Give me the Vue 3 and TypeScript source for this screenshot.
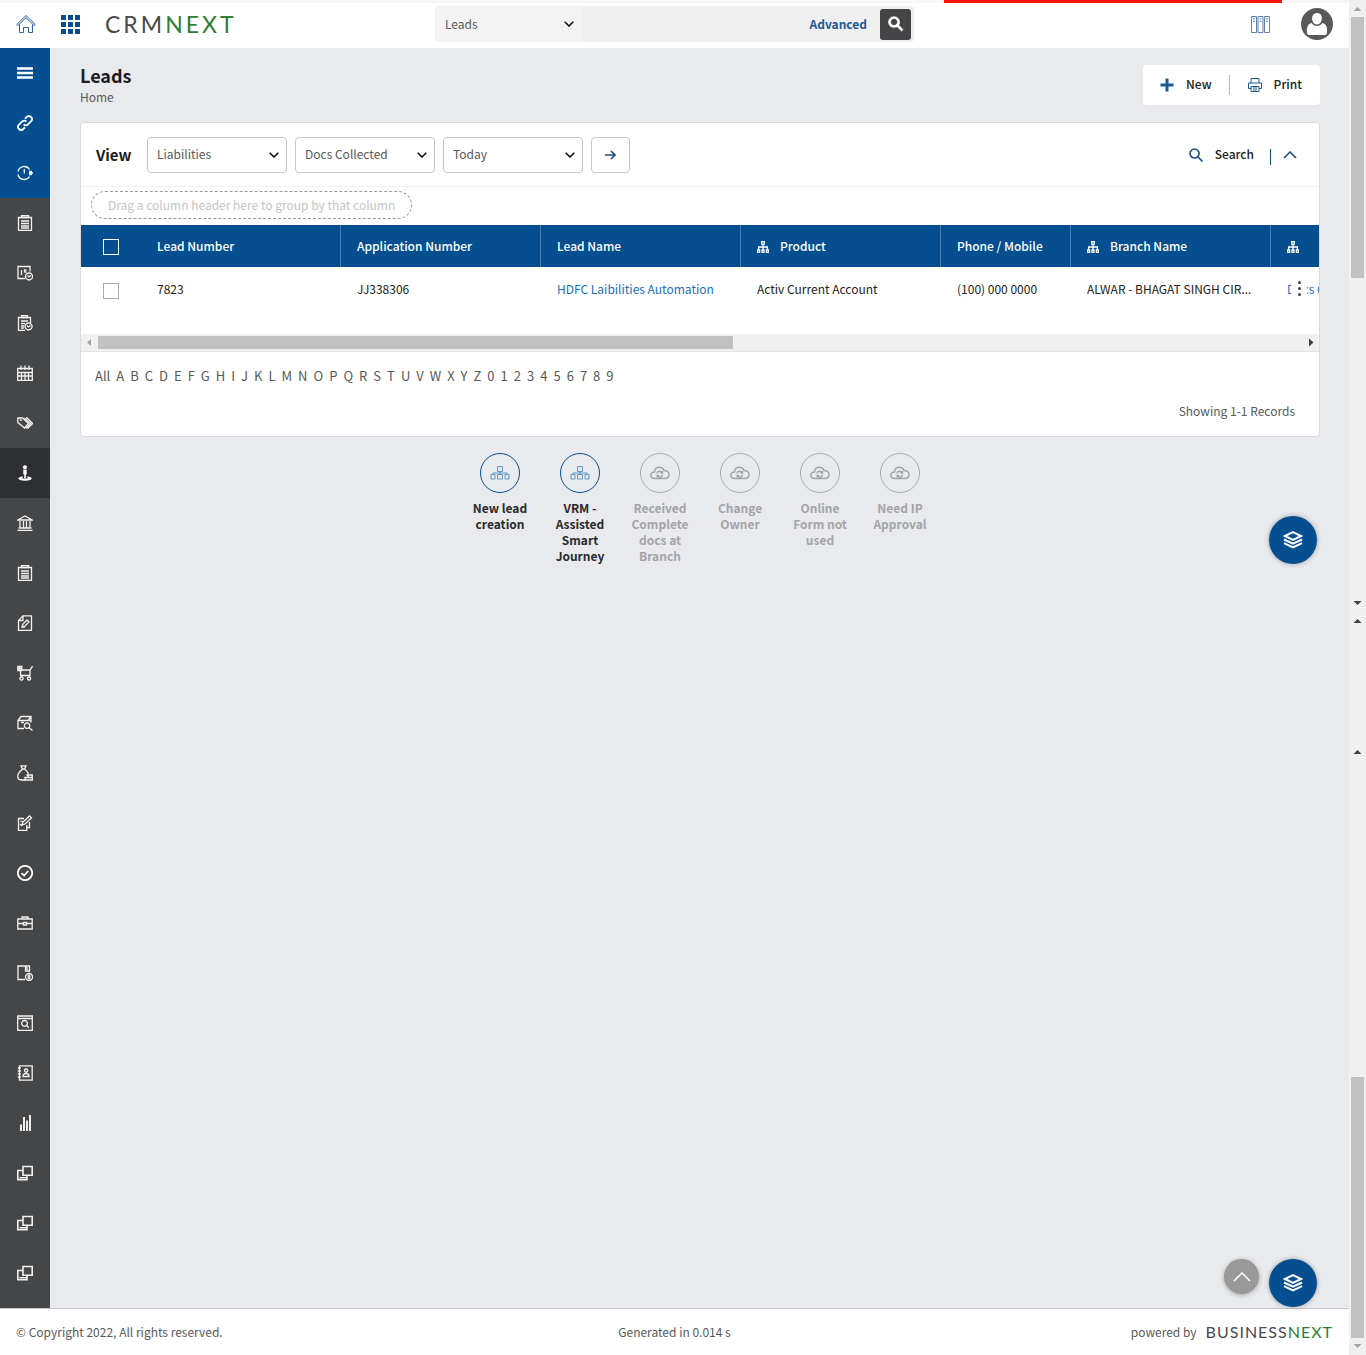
<script setup lang="ts">
import { ref } from 'vue'

interface NavItem {
  label: string
  icon: string
  tone?: 'blue' | 'active'
}

interface Column {
  key: string
  label: string
  width: number
  lookup?: boolean
}

interface QuickAction {
  label: string
  enabled: boolean
}

const icons: Record<string, string[]> = {
  menu: ['M0 3.5H16M0 8H16M0 12.5H16'],
  link: [
    'M6.6 9.4a3 3 0 0 0 4.3 0l3.1-3.1a3 3 0 0 0-4.3-4.3L8 3.7',
    'M9.4 6.6a3 3 0 0 0-4.3 0L2 9.7A3 3 0 0 0 6.3 14L8 12.3',
  ],
  history: ['M1 6.500A6.300 6.300 0 0 1 12.500 4.500M1 9.500A6.300 6.300 0 0 0 12.500 11.500', 'M7.300 4v4.500', 'M12 6.500h3M12 8h4M12 9.500h3'],
  clipboard: ['M1.500 2.500h13v13h-13z', 'M4.500 2.500v-2h7v2z', 'M4 6h8M4 8.500h8M4 11h8M4 13h8'],
  schedule: ['M8 13.500H1v-12h12v5', 'M4.500 5v5M9.500 5H7.500v2h2', 'M12 8a3.500 3.500 0 1 0 .1 0zM10.500 10.500l1.500 1.500 2-1.500'],
  report: ['M8 15.500H1.500v-13h12V8', 'M4.500 2.500v-2h6v2z', 'M4 6h7M4 8.500h4M4 11h3M4 13h3', 'M11.500 8a3.500 3.500 0 1 0 .1 0zM10 10.500l1.500 1.500 2-1.500'],
  calendar: ['M.7 3.500h14.600v11.800H.7z', 'M4 .5V5M8 .5V5M12 .5V5', 'M1 7.500h14M1 11h14M4.500 7v8M8 7v8M11.500 7v8'],
  tags: ['M.8 3h4.700l6 5.500-4 4.500L.8 7.500z', 'M7.500 3l6 5.500-4.500 5', 'M9 3h1l5.500 5.500-5 5', 'M3 5h1v1'],
  person: ['M8 .3a2 2 0 1 1-.1 0z', 'M6.300 4.500h3.400v5h-.9v4H7.200v-4h-.9z', 'M6 11.500C-1 12 0 15.700 8 15.700s9-3.700 2-4.200v1c2.500.5 1 1.200-2 1.200s-4.500-.7-2-1.200z'],
  bank: ['M.8 5L8 1l7.200 4z', 'M3 6v7M6.500 6v7M9.500 6v7M13 6v7', 'M1.500 13h13M.5 15.300h15'],
  docEdit: ['M6 .8h8.500v14.500h-13V5.500zM6 .8v4.700H1.500', 'M5 12l1-3 4-4 2 2-4 4zM5 12h3'],
  cart: ['M.8 1.500h4v4h-4zM2.800 1v5M1 3.500h4', 'M5 5h8l2.500-4M13 5v5.500H3.500V6', 'M4.500 12a1.600 1.600 0 1 0 .1 0zM12 12a1.600 1.600 0 1 0 .1 0z'],
  boxSearch: ['M7 13.500H1v-8h13v2M1 5.500L4 1.500h10v4M14 1.500L11 5.500M4 7.500h3', 'M10 8a2.700 2.700 0 1 0 .1 0zM12 12.500l3.500 3'],
  moneyBag: ['M4 .8h5L7.500 4h-2zM5.500 4C2 7 .5 9.500.8 12c.2 2.500 1.500 3 3.500 3h4M7.500 4c2 1.500 3 3 4 4.500', 'M9.500 10h5.800v5H8v-2.500h7M11 8.500v4'],
  signDoc: ['M7 3.500H1.500v11.800h8.300V10', 'M12.500 7v5.500H10', 'M5 10l1-3 6.500-6 2 2-6.500 6zM3.500 6l3 1M3 9l2 2'],
  check: ['M8 .9a7.100 7.100 0 1 0 .1 0z', 'M4.500 8.200l2.700 2.300 4-4.500'],
  briefcase: ['M.8 4h14.400v10H.8zM5 4V2h6v2M.8 8.500h5.500M9.700 8.500h5.500M6.500 7.500h3v2.500h-3z'],
  docCoin: ['M8 14.500H1V1h11.500v6M8.500 1v5h4M10 2v3', 'M12 8.500a3.500 3.500 0 1 0 .1 0zM10.500 11h3M10.500 13h3M12 9.500v5'],
  windowSearch: ['M.7 1h14.600v14.300H.7zM.7 3.500h14.600', 'M7.500 5.500a2.900 2.900 0 1 0 .1 0zM9.600 10.500l2.200 2.200'],
  contacts: ['M2.500.8h12.700v14.400H2.500zM.8 3h3M.8 6h3M.8 9h3M.8 12h3', 'M9 4a1.600 1.600 0 1 0 .1 0zM6 11.500c0-4 6-4 6 0z'],
  chart: ['M4 9.500V16M7 2V16M10 5.500V16M13 0V16'],
  windows: ['M6 1.500h9.200v8.700H6z', 'M6 5.500H.8v9.200H10V10.500M2.500 12.700h8'],
}

const navItems: NavItem[] = [
  { label: 'Menu', icon: 'menu', tone: 'blue' },
  { label: 'Links', icon: 'link', tone: 'blue' },
  { label: 'Recent', icon: 'history', tone: 'blue' },
  { label: 'Tasks', icon: 'clipboard' },
  { label: 'Schedule', icon: 'schedule' },
  { label: 'Reports', icon: 'report' },
  { label: 'Calendar', icon: 'calendar' },
  { label: 'Offers', icon: 'tags' },
  { label: 'Leads', icon: 'person', tone: 'active' },
  { label: 'Accounts', icon: 'bank' },
  { label: 'Cases', icon: 'clipboard' },
  { label: 'Documents', icon: 'docEdit' },
  { label: 'Orders', icon: 'cart' },
  { label: 'Products', icon: 'boxSearch' },
  { label: 'Loans', icon: 'moneyBag' },
  { label: 'Applications', icon: 'signDoc' },
  { label: 'Approvals', icon: 'check' },
  { label: 'Portfolio', icon: 'briefcase' },
  { label: 'Deposits', icon: 'docCoin' },
  { label: 'Enquiry', icon: 'windowSearch' },
  { label: 'Contacts', icon: 'contacts' },
  { label: 'Analytics', icon: 'chart' },
  { label: 'Workspace 1', icon: 'windows' },
  { label: 'Workspace 2', icon: 'windows' },
  { label: 'Workspace 3', icon: 'windows' },
]

const columns: Column[] = [
  { key: 'number', label: 'Lead Number', width: 200 },
  { key: 'application', label: 'Application Number', width: 200 },
  { key: 'name', label: 'Lead Name', width: 200 },
  { key: 'product', label: 'Product', width: 200, lookup: true },
  { key: 'phone', label: 'Phone / Mobile', width: 130 },
  { key: 'branch', label: 'Branch Name', width: 200, lookup: true },
  { key: 'status', label: '', width: 200, lookup: true },
]

const filters = ref([
  { name: 'Category', value: 'Liabilities' },
  { name: 'Status', value: 'Docs Collected' },
  { name: 'Period', value: 'Today' },
])

const letters: string[] = ['All', ...'ABCDEFGHIJKLMNOPQRSTUVWXYZ0123456789']

const actions: QuickAction[] = [
  { label: 'New lead creation', enabled: true },
  { label: 'VRM - Assisted Smart Journey', enabled: true },
  { label: 'Received Complete docs at Branch', enabled: false },
  { label: 'Change Owner', enabled: false },
  { label: 'Online Form not used', enabled: false },
  { label: 'Need IP Approval', enabled: false },
]

const query = ref('')
</script>

<template>
  <div class="shell">
    <div class="progress"><span></span></div>
    <div class="page">
      <header class="topbar">
        <div class="brand">
          <a href="#" class="home" aria-label="Home">
            <svg width="20" height="20" viewBox="0 0 20 20"><path d="M.7 10.500L10 1.500l9.300 9-1.200 1L10 3.700 1.900 11.500zM3.500 10.500v8h4v-5h5v5h4v-8" /></svg>
          </a>
          <button class="apps" aria-label="Applications">
            <svg width="19" height="19" viewBox="0 0 19 19"><path d="M0 0h5v5H0zM7 0h5v5H7zM14 0h5v5h-5zM0 7h5v5H0zM7 7h5v5H7zM14 7h5v5h-5zM0 14h5v5H0zM7 14h5v5H7zM14 14h5v5h-5z" /></svg>
          </button>
          <span class="logo">CRM<b>NEXT</b></span>
        </div>
        <form class="search" @submit.prevent>
          <label class="pick">
            <select aria-label="Search in"><option>Leads</option></select>
            <svg class="chev" width="10" height="6" viewBox="0 0 10 6"><path d="M.7.700l4.300 4.300L9.300.700" /></svg>
          </label>
          <input v-model="query" type="text" aria-label="Search text" />
          <a href="#">Advanced</a>
          <button aria-label="Search">
            <svg width="16" height="16" viewBox="0 0 16 16"><path d="M6 1.500a4.500 4.500 0 1 0 .1 0zM9.500 9.500l5 5" /></svg>
          </button>
        </form>
        <div class="tools">
          <button class="books" aria-label="Library">
            <svg width="19" height="17" viewBox="0 0 19 17"><path d="M.5.500h5v16h-5zM7 .5h5v16H7zM13.500.500h5v16h-5zM2 3h2M8.500 3h2M15 3h2M2 5.500h2M8.500 5.500h2M15 5.500h2" /></svg>
          </button>
          <button class="avatar" aria-label="Profile">
            <svg width="32" height="32" viewBox="0 0 32 32"><circle cx="16" cy="16" r="16" fill="#58595b" /><path d="M16 5c7 0 6 11.500 0 11.500S9 5 16 5zM10.500 15c3 4 8 4 11 0 4 1 5 5 4.500 9.500-.2 2-1 2.500-3 2.500H9c-2 0-2.800-.5-3-2.500C5.500 20 6.500 16 10.500 15z" fill="#fff" /></svg>
          </button>
        </div>
      </header>

      <div class="body">
        <nav class="sidebar">
          <a v-for="item in navItems" :key="item.label" href="#" :class="item.tone" :aria-label="item.label">
            <svg width="16" height="16" viewBox="0 0 16 16" :class="item.icon">
              <path v-for="d in icons[item.icon]" :key="d" :d="d" />
            </svg>
          </a>
        </nav>

        <main class="main">
          <div class="heading">
            <div>
              <h1>Leads</h1>
              <a href="#">Home</a>
            </div>
            <div class="commands">
              <button>
                <svg width="14" height="14" viewBox="0 0 14 14"><path d="M7 .5v13M.5 7h13" stroke-width="3" /></svg>
                <span>New</span>
              </button>
              <i></i>
              <button>
                <svg width="14" height="14" viewBox="0 0 14 14"><path d="M3 5V.5h8V5M3 10.500H.5V5h13v5.500H11M3 8.500h8v5H3zM5 10h4M5 12h4" /></svg>
                <span>Print</span>
              </button>
            </div>
          </div>

          <section class="card">
            <div class="filters">
              <h2>View</h2>
              <label v-for="f in filters" :key="f.name" class="pick">
                <select v-model="f.value" :aria-label="f.name"><option>{{ f.value }}</option></select>
                <svg class="chev" width="10" height="6" viewBox="0 0 10 6"><path d="M.7.700l4.300 4.300L9.300.700" /></svg>
              </label>
              <button class="go" aria-label="Apply view">
                <svg width="11" height="10" viewBox="0 0 11 10"><path d="M0 5h10M6 1l4 4-4 4" /></svg>
              </button>
              <button class="find">
                <svg width="14" height="14" viewBox="0 0 14 14"><path d="M5.500 1a4.500 4.500 0 1 0 .1 0zM9 9l4.500 4.500" /></svg>
                <span>Search</span>
              </button>
              <i></i>
              <button class="fold" aria-label="Collapse">
                <svg width="14" height="8" viewBox="0 0 14 8"><path d="M1 7l6-6 6 6" /></svg>
              </button>
            </div>
            <div class="grouping"><span>Drag a column header here to group by that column</span></div>

            <div class="grid">
              <table>
                <colgroup>
                  <col class="tick" />
                  <col v-for="c in columns" :key="c.key" :style="{ width: c.width + 'px' }" />
                </colgroup>
                <thead>
                  <tr>
                    <th class="tick"><input type="checkbox" aria-label="Select all" /></th>
                    <th v-for="c in columns" :key="c.key">
                      <svg v-if="c.lookup" width="12" height="12" viewBox="0 0 12 12"><path d="M4.700.600h2.600v2.600H4.700zM6 3.500V9M1.600 9V6h8.800v3M.6 9h2v2.400h-2zM5 9h2v2.400H5zM9.400 9h2v2.400h-2z" /></svg><span>{{ c.label }}</span>
                    </th>
                  </tr>
                </thead>
                <tbody>
                  <tr>
                    <td class="tick"><input type="checkbox" aria-label="Select lead 7823" /></td>
                    <td>7823</td>
                    <td>JJ338306</td>
                    <td><a href="#">HDFC Laibilities Automation</a></td>
                    <td>Activ Current Account</td>
                    <td>(100) 000 0000</td>
                    <td>ALWAR - BHAGAT SINGH CIR...</td>
                    <td><a href="#">Docs C</a></td>
                  </tr>
                </tbody>
              </table>
              <button class="more" aria-label="Row menu"><b></b><b></b><b></b></button>
            </div>
            <div class="hscroll">
              <svg width="17" height="17" viewBox="0 0 17 17"><path d="M10 5v7L6 8.500z" fill="#a3a3a3" /></svg>
              <span><b></b></span>
              <svg width="17" height="17" viewBox="0 0 17 17"><path d="M7 4.500v8l4.500-4z" fill="#404040" /></svg>
            </div>
            <div class="letters"><a v-for="l in letters" :key="l" href="#">{{ l }}</a></div>
            <p class="count">Showing 1-1 Records</p>
          </section>

          <div class="actions">
            <button v-for="a in actions" :key="a.label" :disabled="!a.enabled">
              <span>
                <svg v-if="a.enabled" width="20" height="14" viewBox="0 0 20 14"><path d="M7.500.500h5v5h-5zM1 8.500h4v4.500H1zM7.500 8.500h5v4.500h-5zM15 8.500h4v4.500h-4zM10 5.500v3M3 8.500V7h14v1.500" /></svg>
                <svg v-else width="20" height="14" viewBox="0 0 20 14"><path d="M5 12.500C-.5 12.500-.5 6 4.500 6 5 0 12.500 0 14 4.500c6.500 0 6.500 8 1 8z" /><path d="M7 7.500a2.700 2.700 0 0 1 5-1M12.500 9a2.700 2.700 0 0 1-5 .8M12.500 5v2h-2M7.200 11.500V9.500h2" /></svg>
              </span>
              {{ a.label }}
            </button>
          </div>

          <button class="fab first" aria-label="Layers">
            <svg width="20" height="18" viewBox="0 0 20 18"><path d="M10 1.200l8 3.800-8 3.800L2 5z" /><path d="M1 8.500l9 4.200 9-4.200M1 12.200l9 4.300 9-4.300" /></svg>
          </button>
          <div class="floaters">
            <button class="top" aria-label="Back to top">
              <svg width="18" height="10" viewBox="0 0 18 10"><path d="M1 9l8-8 8 8" /></svg>
            </button>
            <button class="fab" aria-label="Layers">
              <svg width="20" height="18" viewBox="0 0 20 18"><path d="M10 1.200l8 3.800-8 3.800L2 5z" /><path d="M1 8.500l9 4.200 9-4.200M1 12.200l9 4.300 9-4.300" /></svg>
            </button>
          </div>
        </main>
      </div>

      <footer class="footer">
        <span>© Copyright 2022, All rights reserved.</span>
        <span>Generated in 0.014 s</span>
        <span class="powered">powered by <span class="maker">BUSINESS<b>NEXT</b></span></span>
      </footer>
    </div>

    <div class="vscroll">
      <svg width="17" height="17" viewBox="0 0 17 17"><path d="M4.500 11h8l-4-4z" fill="#a3a3a3" /></svg>
      <b></b>
      <span class="gap-a"></span>
      <svg width="17" height="17" viewBox="0 0 17 17"><path d="M4.500 7h8l-4 4z" fill="#404040" /></svg>
      <svg width="17" height="17" viewBox="0 0 17 17"><path d="M4.500 12h8l-4-4z" fill="#404040" /></svg>
      <span class="gap-b"></span>
      <svg width="17" height="17" viewBox="0 0 17 17"><path d="M4.500 11h8l-4-4z" fill="#404040" /></svg>
      <span class="gap-c"></span>
      <b></b>
      <svg width="17" height="17" viewBox="0 0 17 17"><path d="M4.500 6h8l-4 4z" fill="#a3a3a3" /></svg>
    </div>
  </div>
</template>

<style>
body {
  margin: 0;
  background: #e9eaee;
}
</style>

<style scoped>
* {
  box-sizing: border-box;
}
.shell {
  position: relative;
  display: flex;
  min-height: 100vh;
  font: 12px/16px "Noto Sans CJK SC", "Noto Sans CJK JP", sans-serif;
  color: #58595b;
}
button {
  padding: 0;
  border: 0;
  background: none;
  font: inherit;
  color: inherit;
}
a {
  color: inherit;
  text-decoration: none;
}
svg {
  display: block;
  flex: none;
  fill: none;
  stroke: none;
}
.progress {
  position: absolute;
  top: 0;
  left: 0;
  right: 17px;
  height: 3px;
  background: #f7f7f7;
}
.progress span {
  display: block;
  width: 25%;
  height: 3px;
  margin-left: 70%;
  background: #fb1207;
}
.page {
  flex: 1;
  min-width: 0;
  display: flex;
  flex-direction: column;
}

/* Top bar */
.topbar {
  display: grid;
  grid-template-columns: 1fr 479px 1fr;
  align-items: center;
  height: 48px;
  background: #fff;
}
.brand {
  display: flex;
  align-items: center;
  padding-left: 16px;
}
.home svg {
  stroke: #2e6299;
}
.apps {
  margin: 0 25px;
}
.apps svg {
  fill: #054f90;
}
.logo {
  font: 23px/24px Lato, sans-serif;
  letter-spacing: 3px;
  color: #4a4a4c;
}
.logo b,
.maker b {
  font-weight: 400;
  color: #2f7d36;
}
.search {
  display: flex;
  align-items: center;
  height: 36px;
  padding: 1px 3px 1px 1px;
  border-radius: 4px;
  background: #efefef;
}
.pick {
  position: relative;
  display: block;
}
.pick select {
  width: 100%;
  height: 100%;
  padding: 0 9px 1px;
  border: 0;
  appearance: none;
  background: none;
  font: inherit;
  color: #58595b;
}
.chev {
  position: absolute;
  top: 50%;
  right: 8px;
  margin-top: -3px;
  stroke: #111;
  stroke-width: 1.600;
  pointer-events: none;
}
.search .pick {
  width: 146px;
  height: 34px;
  background: #f3f3f3;
}
.search input {
  flex: 1;
  min-width: 0;
  height: 34px;
  border: 0;
  background: none;
  font: inherit;
}
.search a {
  font-weight: 700;
  color: #1d5a94;
}
.search button {
  display: grid;
  place-items: center;
  width: 31px;
  height: 31px;
  margin-left: 13px;
  border-radius: 3px;
  background: #454548;
}
.search button svg {
  stroke: #fff;
  stroke-width: 2.600;
}
.tools {
  display: flex;
  align-items: center;
  justify-content: flex-end;
  gap: 31px;
  padding-right: 16px;
}
.books svg {
  stroke: #5f83b0;
}

/* Sidebar */
.body {
  flex: 1;
  display: flex;
}
.sidebar {
  flex: none;
  width: 50px;
  padding-bottom: 10px;
  background: #454648;
}
.sidebar a {
  display: grid;
  place-items: center;
  height: 50px;
}
.sidebar a.blue {
  background: #054f90;
}
.sidebar a.active {
  background: #2e2f33;
}
.sidebar svg {
  stroke: #f2f2f2;
  stroke-width: 1.300;
}
.sidebar svg.menu {
  stroke: #fff;
  stroke-width: 2.400;
}
.sidebar svg.link,
.sidebar svg.chart,
.sidebar svg.check {
  stroke: #fff;
  stroke-width: 1.800;
}
.sidebar svg.windows {
  stroke-width: 1.600;
}
.sidebar svg.person {
  fill: #fff;
  stroke: none;
}

/* Main area */
.main {
  position: relative;
  flex: 1;
  min-width: 0;
  padding: 17px 29px 0 30px;
}
.heading {
  display: flex;
  justify-content: space-between;
  margin-bottom: 17px;
}
h1 {
  margin: 0 0 4px;
  font: 700 18px/20px "Noto Sans CJK SC", sans-serif;
  color: #1d1d1f;
}
.heading a {
  display: block;
}
.commands {
  display: flex;
  align-items: center;
  height: 40px;
  padding: 0 18px 0 17px;
  border-radius: 4px;
  background: #fff;
}
.commands button,
.find {
  display: flex;
  align-items: center;
  gap: 12px;
  font-weight: 500;
  color: #222;
}
.commands button span,
.find span {
  padding-bottom: 2px;
}
.commands svg {
  stroke: #1d5a94;
}
.commands i {
  width: 1px;
  height: 20px;
  margin: 0 18px 0 17px;
  background: #a9bdd3;
}
.card {
  border: 1px solid #d8dadd;
  border-radius: 4px;
  background: #fff;
}
.filters {
  display: flex;
  align-items: center;
  gap: 8px;
  height: 64px;
  padding: 0 22px 0 15px;
  border-bottom: 1px solid #f0f0f0;
}
h2 {
  width: 43px;
  margin: 0;
  font: 700 15px/20px "Noto Sans CJK SC", sans-serif;
  color: #1d1d1f;
}
.filters .pick {
  width: 140px;
  height: 36px;
}
.filters .pick select,
.go {
  border: 1px solid #c6c6c8;
  border-radius: 4px;
}
.go {
  display: grid;
  place-items: center;
  width: 39px;
  height: 36px;
}
.go svg,
.find svg,
.fold svg {
  stroke: #1d4f87;
  stroke-width: 1.600;
}
.find {
  margin-left: auto;
}
.filters i {
  width: 1px;
  height: 16px;
  margin: 4px 4px 0 8px;
  background: #054f90;
}
.grouping {
  display: flex;
  padding: 4px 10px 6px;
}
.grouping span {
  height: 28px;
  padding: 0 16px;
  border: 1px dashed #999;
  border-radius: 14px;
  line-height: 26px;
  color: #c4c4c6;
}

/* Lead table */
.grid {
  position: relative;
  overflow: hidden;
}
table {
  width: 1390px;
  table-layout: fixed;
  border-collapse: separate;
  border-spacing: 0;
  color: #222;
}
col.tick {
  width: 60px;
}
th,
td {
  padding: 0 14px 0 16px;
  text-align: left;
  white-space: nowrap;
}
th {
  height: 42px;
  border-right: 1px solid #4a80b1;
  background: #054f90;
  font-weight: 500;
  color: #fff;
}
th svg {
  display: inline-block;
  margin-right: 11px;
  vertical-align: -2px;
  stroke: #fff;
  stroke-width: 1.300;
}
td {
  height: 67px;
  padding-top: 14px;
  vertical-align: top;
}
td a {
  color: #1b6ec2;
}
th.tick {
  border-right: 0;
}
.tick {
  padding-left: 22px;
}
.tick input {
  display: block;
  width: 16px;
  height: 16px;
  margin: 2px 0 0;
  appearance: none;
  border: 1px solid #a9a9a9;
}
th.tick input {
  border-color: #fff;
}
.more {
  position: absolute;
  top: 56px;
  right: 12px;
  display: flex;
  flex-direction: column;
  align-items: center;
  gap: 3px;
  width: 16px;
  background: #fff;
}
.more b {
  width: 3px;
  height: 3px;
  border-radius: 50%;
  background: #444;
}
.hscroll {
  display: flex;
  height: 18px;
  border-bottom: 1px solid #e4e4e4;
  background: #f0f0f0;
}
.hscroll span {
  flex: 1;
  padding: 2px 0;
}
.hscroll b {
  display: block;
  width: 52.700%;
  height: 13px;
  background: #c1c1c1;
}
.letters {
  display: flex;
  flex-wrap: wrap;
  gap: 6px;
  padding: 16px 14px 0;
  font-size: 13px;
}
.count {
  margin: 19px 24px 17px;
  text-align: right;
}

/* Quick actions */
.actions {
  display: flex;
  justify-content: center;
  margin-top: 16px;
}
.actions button {
  display: flex;
  flex-direction: column;
  align-items: center;
  width: 80px;
  padding: 0 10px;
  font-weight: 700;
  color: #2a2a2c;
}
.actions button:disabled {
  color: #a3a4a6;
}
.actions span {
  display: grid;
  place-items: center;
  width: 40px;
  height: 40px;
  margin-bottom: 7px;
  border: 1px solid #054f90;
  border-radius: 50%;
}
.actions svg {
  stroke: #5f97cc;
}
.actions button:disabled span {
  border-color: #a9aaac;
}
.actions button:disabled svg {
  stroke: #a3a4a6;
  stroke-width: 1.500;
}

/* Floating buttons */
.fab,
.top {
  display: grid;
  place-items: center;
  border-radius: 50%;
}
.fab {
  width: 48px;
  height: 48px;
  background: #054f90;
  box-shadow: 0 0 5px rgba(0, 0, 0, 0.3);
}
.fab svg {
  stroke: #fff;
  stroke-width: 2;
}
.fab.first {
  position: absolute;
  top: 468px;
  right: 32px;
}
.floaters {
  position: absolute;
  right: 32px;
  bottom: 1px;
  display: flex;
  gap: 10px;
}
.top {
  width: 35px;
  height: 35px;
  background: #999;
  box-shadow: 0 1px 5px rgba(0, 0, 0, 0.3);
}
.top svg {
  stroke: #fff;
  stroke-width: 1.500;
}

/* Footer */
.footer {
  display: grid;
  grid-template-columns: 1fr auto 1fr;
  align-items: center;
  height: 47px;
  padding: 0 16px;
  border-top: 1px solid #c4c5c8;
  background: #fff;
}
.powered {
  display: flex;
  justify-content: flex-end;
  gap: 9px;
}
.maker {
  font: 16px/16px Lato, sans-serif;
  letter-spacing: 1px;
  color: #4a4a4c;
}

/* Scroll track */
.vscroll {
  flex: none;
  display: flex;
  flex-direction: column;
  width: 17px;
  background: #f0f0f0;
}
.vscroll b {
  height: 261px;
  margin: 0 2px;
  background: #c1c1c1;
}
.gap-a {
  flex: 316;
}
.gap-b {
  flex: 114;
}
.gap-c {
  flex: 317;
}
</style>
